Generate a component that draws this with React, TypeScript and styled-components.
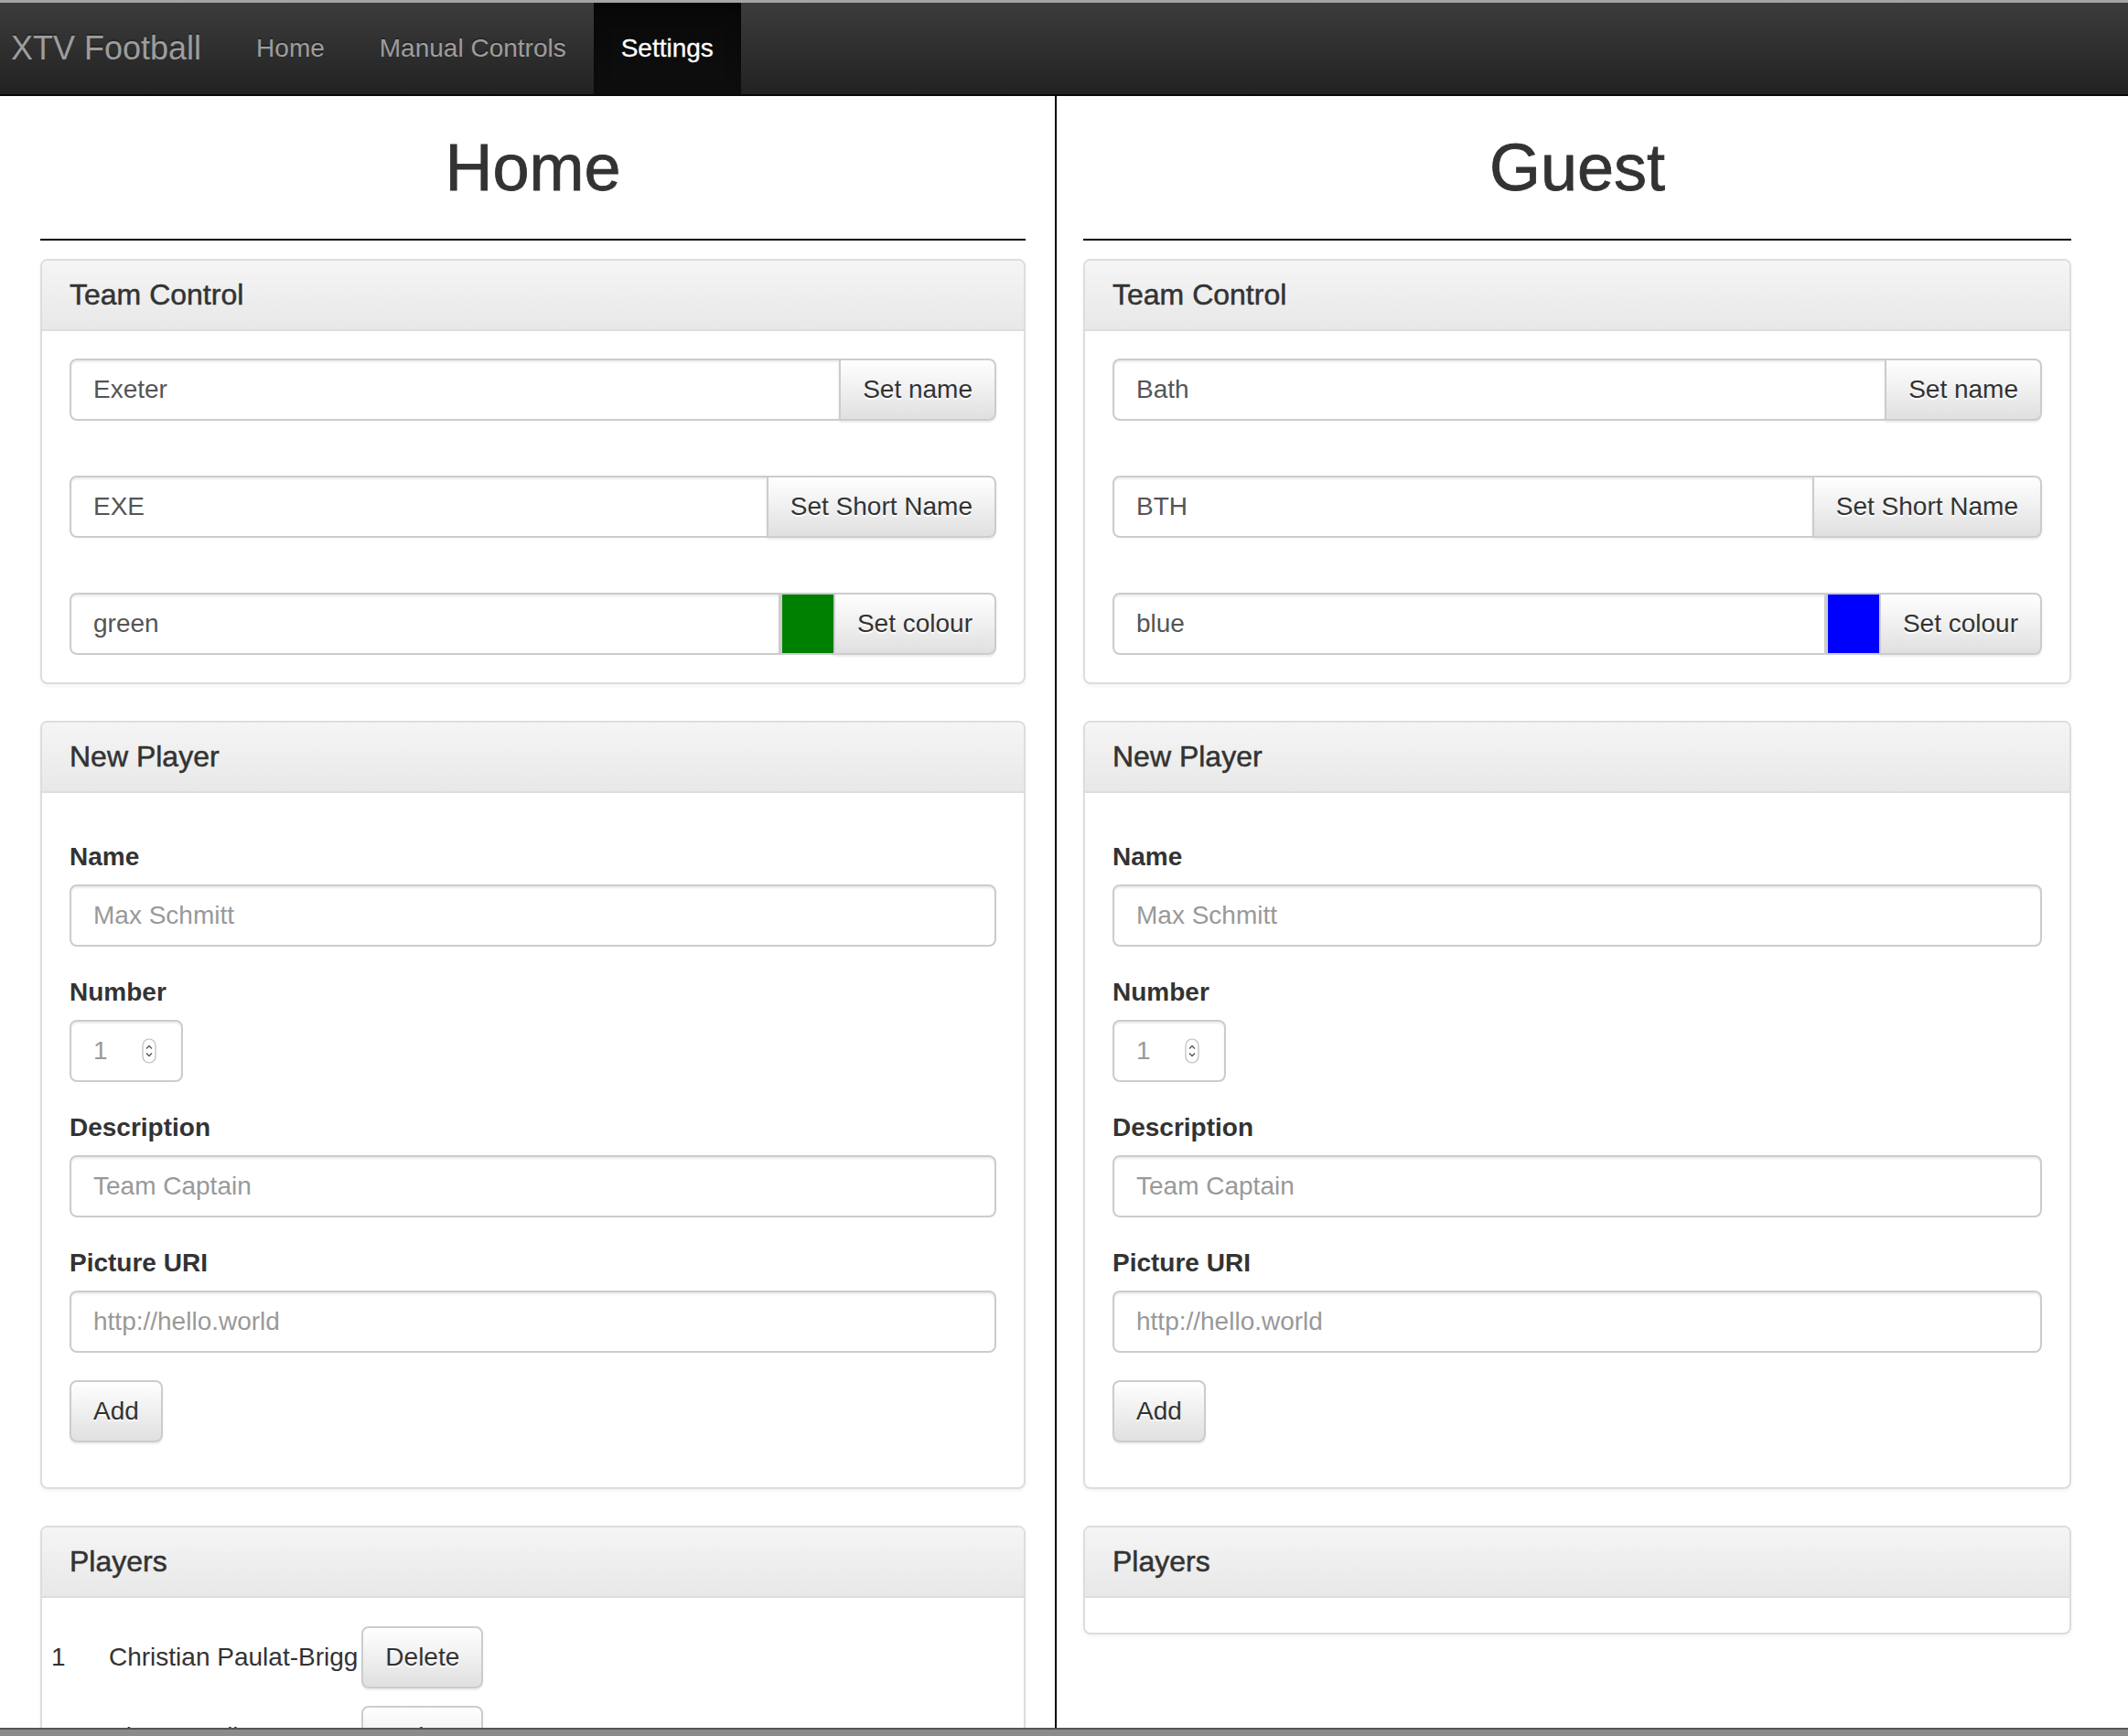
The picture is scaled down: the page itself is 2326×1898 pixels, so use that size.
import React from "react";
import styled, { createGlobalStyle } from "styled-components";

const GlobalStyle = createGlobalStyle`
  * { box-sizing: border-box; }
  html, body { margin: 0; padding: 0; background: #fff; }
  body {
    font-family: "Liberation Sans", Helvetica, Arial, sans-serif;
    font-size: 28px;
    line-height: 40px;
    color: #333;
  }
  input::placeholder { color: #999; opacity: 1; }
  input[type=number]::-webkit-inner-spin-button,
  input[type=number]::-webkit-outer-spin-button { -webkit-appearance: none; margin: 0; }
`;

const Navbar = styled.nav`
  display: flex;
  align-items: stretch;
  height: 105px;
  border-top: 3px solid #a5a5a5;
  border-bottom: 2px solid #080808;
  background: linear-gradient(to bottom, #3c3c3c 0%, #222 100%);
`;

const Brand = styled.a`
  display: block;
  padding: 30px 30px 30px 12px;
  font-size: 36px;
  line-height: 40px;
  color: #9d9d9d;
  text-decoration: none;
  text-shadow: 0 -2px 0 rgba(0, 0, 0, 0.25);
`;

const NavLink = styled.a<{ $active?: boolean }>`
  display: block;
  padding: 30px;
  font-size: 28px;
  line-height: 40px;
  text-decoration: none;
  color: ${(p) => (p.$active ? "#fff" : "#9d9d9d")};
  text-shadow: 0 -2px 0 rgba(0, 0, 0, 0.25);
  -webkit-text-stroke: ${(p) => (p.$active ? "0.3px #fff" : "0")};
  background: ${(p) =>
    p.$active ? "linear-gradient(to bottom, #080808 0%, #0f0f0f 100%)" : "transparent"};
  box-shadow: ${(p) => (p.$active ? "inset 0 6px 18px rgba(0, 0, 0, 0.25)" : "none")};
`;

const Main = styled.main`
  display: grid;
  grid-template-columns: 1139px 1141px;
  margin-left: 14px;
`;

const Column = styled.section<{ $side: "left" | "right" }>`
  padding: ${(p) => (p.$side === "left" ? "0 32px 0 30px" : "0 30px 0 29px")};
  border-left: ${(p) => (p.$side === "right" ? "2px solid #000" : "none")};
`;

const PageHeader = styled.div`
  margin: 39px 0 20px;
  padding-bottom: 18px;
  border-bottom: 2px solid #000;
`;

const Title = styled.h1`
  margin: 0 0 20px;
  font-size: 72px;
  line-height: 79px;
  font-weight: 500;
  text-align: center;
  color: #333;
  -webkit-text-stroke: 0.8px #333;
`;

const Panel = styled.div`
  margin-bottom: 40px;
  border: 2px solid #ddd;
  border-radius: 8px;
  background: #fff;
  box-shadow: 0 2px 4px rgba(0, 0, 0, 0.05);
`;

const PanelHeading = styled.div`
  padding: 20px 30px;
  background: linear-gradient(to bottom, #f5f5f5 0%, #e8e8e8 100%);
  border-bottom: 2px solid #ddd;
  border-radius: 6px 6px 0 0;
`;

const PanelTitle = styled.h3`
  margin: 0;
  font-size: 32px;
  line-height: 35px;
  font-weight: 500;
  color: #333;
  -webkit-text-stroke: 0.5px #333;
`;

const PanelBody = styled.div<{ $pad: string }>`
  padding: ${(p) => p.$pad};
`;

const GroupStack = styled.div`
  display: flex;
  flex-direction: column;
  gap: 60px;
`;

const InputGroup = styled.div`
  display: flex;
  height: 68px;
`;

const TextInput = styled.input<{ $grouped?: boolean }>`
  display: block;
  flex: 1;
  min-width: 0;
  width: 100%;
  height: 68px;
  padding: 12px 24px;
  font-family: inherit;
  font-size: 28px;
  line-height: 40px;
  color: #555;
  background: #fff;
  border: 2px solid #ccc;
  border-radius: ${(p) => (p.$grouped ? "8px 0 0 8px" : "8px")};
  box-shadow: inset 0 2px 2px rgba(0, 0, 0, 0.075);
  outline: none;
`;

const Button = styled.button<{ $grouped?: boolean }>`
  flex: none;
  height: 68px;
  padding: 12px 24px;
  margin-left: ${(p) => (p.$grouped ? "-2px" : "0")};
  font-family: inherit;
  font-size: 28px;
  line-height: 40px;
  color: #333;
  white-space: nowrap;
  text-shadow: 0 2px 0 #fff;
  background: linear-gradient(to bottom, #fff 0%, #e0e0e0 100%);
  border: 2px solid #ccc;
  border-radius: ${(p) => (p.$grouped ? "0 8px 8px 0" : "8px")};
  box-shadow: inset 0 2px 0 rgba(255, 255, 255, 0.15), 0 2px 2px rgba(0, 0, 0, 0.075);
  cursor: pointer;
`;

const Swatch = styled.span<{ $color: string }>`
  flex: none;
  width: 60px;
  background: ${(p) => p.$color};
  border-top: 2px solid #ccc;
  border-bottom: 2px solid #ccc;
  border-left: 2px solid #ccc;
`;

const FormGroup = styled.div`
  margin-bottom: 30px;
`;

const Label = styled.label`
  display: block;
  margin-bottom: 10px;
  font-weight: 700;
  line-height: 40px;
  color: #333;
`;

const NumberWrap = styled.div`
  position: relative;
  width: 124px;
`;

const Spinner = styled.svg`
  position: absolute;
  right: 29px;
  top: 50%;
  transform: translateY(-50%);
  pointer-events: none;
`;

const PlayerTable = styled.table`
  border-collapse: separate;
  border-spacing: 4px 5px;
`;

const Cell = styled.td<{ $w?: number }>`
  padding: 7px 0;
  vertical-align: middle;
  white-space: nowrap;
  width: ${(p) => (p.$w ? `${p.$w}px` : "auto")};
`;

const BottomBar = styled.div`
  position: fixed;
  left: 0;
  right: 0;
  bottom: 0;
  height: 9px;
  background: #8b8b8b;
  border-top: 2px solid #555;
`;

type Team = {
  title: string;
  name: string;
  short: string;
  colour: string;
  swatch: string;
  players: { num: number; name: string }[];
};

const teams: Team[] = [
  {
    title: "Home",
    name: "Exeter",
    short: "EXE",
    colour: "green",
    swatch: "#008000",
    players: [
      { num: 1, name: "Christian Paulat-Brigg" },
      { num: 2, name: "Alex Farrell" },
    ],
  },
  {
    title: "Guest",
    name: "Bath",
    short: "BTH",
    colour: "blue",
    swatch: "#0000ff",
    players: [],
  },
];

function SpinIcon() {
  return (
    <Spinner width="16" height="28" viewBox="0 0 16 28">
      <rect x="1" y="1" width="14" height="26" rx="7" fill="#fff" stroke="#bbb" strokeWidth="1.2" />
      <path d="M5 11.5 L8 8.5 L11 11.5" fill="none" stroke="#555" strokeWidth="1.3" />
      <path d="M5 16.5 L8 19.5 L11 16.5" fill="none" stroke="#555" strokeWidth="1.3" />
    </Spinner>
  );
}

function TeamColumn({ team, side }: { team: Team; side: "left" | "right" }) {
  return (
    <Column $side={side}>
      <PageHeader>
        <Title>{team.title}</Title>
      </PageHeader>

      <Panel>
        <PanelHeading>
          <PanelTitle>Team Control</PanelTitle>
        </PanelHeading>
        <PanelBody $pad="30px">
          <GroupStack>
            <InputGroup>
              <TextInput $grouped defaultValue={team.name} />
              <Button $grouped>Set name</Button>
            </InputGroup>
            <InputGroup>
              <TextInput $grouped defaultValue={team.short} />
              <Button $grouped>Set Short Name</Button>
            </InputGroup>
            <InputGroup>
              <TextInput $grouped defaultValue={team.colour} />
              <Swatch $color={team.swatch} />
              <Button $grouped>Set colour</Button>
            </InputGroup>
          </GroupStack>
        </PanelBody>
      </Panel>

      <Panel>
        <PanelHeading>
          <PanelTitle>New Player</PanelTitle>
        </PanelHeading>
        <PanelBody $pad="50px 30px 49px">
          <FormGroup>
            <Label>Name</Label>
            <TextInput placeholder="Max Schmitt" />
          </FormGroup>
          <FormGroup>
            <Label>Number</Label>
            <NumberWrap>
              <TextInput type="number" placeholder="1" />
              <SpinIcon />
            </NumberWrap>
          </FormGroup>
          <FormGroup>
            <Label>Description</Label>
            <TextInput placeholder="Team Captain" />
          </FormGroup>
          <FormGroup>
            <Label>Picture URI</Label>
            <TextInput placeholder="http://hello.world" />
          </FormGroup>
          <Button>Add</Button>
        </PanelBody>
      </Panel>

      <Panel>
        <PanelHeading>
          <PanelTitle>Players</PanelTitle>
        </PanelHeading>
        <PanelBody $pad="19px 6px">
          {team.players.length > 0 && (
            <PlayerTable>
              <tbody>
                {team.players.map((p) => (
                  <tr key={p.num}>
                    <Cell $w={59}>{p.num}</Cell>
                    <Cell>{p.name}</Cell>
                    <Cell>
                      <Button>Delete</Button>
                    </Cell>
                  </tr>
                ))}
              </tbody>
            </PlayerTable>
          )}
        </PanelBody>
      </Panel>
    </Column>
  );
}

export default function App() {
  return (
    <>
      <GlobalStyle />
      <Navbar>
        <Brand href="#">XTV Football</Brand>
        <NavLink href="#">Home</NavLink>
        <NavLink href="#">Manual Controls</NavLink>
        <NavLink href="#" $active>
          Settings
        </NavLink>
      </Navbar>
      <Main>
        <TeamColumn team={teams[0]} side="left" />
        <TeamColumn team={teams[1]} side="right" />
      </Main>
      <BottomBar />
    </>
  );
}
